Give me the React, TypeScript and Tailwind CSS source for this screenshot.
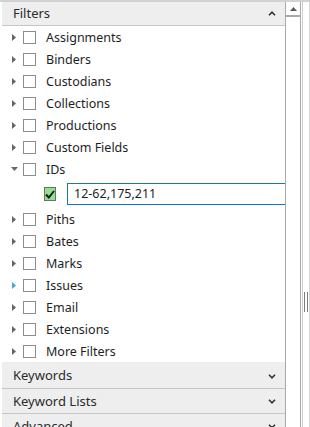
import React from 'react';

type Item = { label: string; open?: boolean; hover?: boolean };

const ITEMS: Item[] = [
  { label: 'Assignments' },
  { label: 'Binders' },
  { label: 'Custodians' },
  { label: 'Collections' },
  { label: 'Productions' },
  { label: 'Custom Fields' },
  { label: 'IDs', open: true },
  { label: 'Piths' },
  { label: 'Bates' },
  { label: 'Marks' },
  { label: 'Issues', hover: true },
  { label: 'Email' },
  { label: 'Extensions' },
  { label: 'More Filters' },
];

function Arrow({ open, hover }: { open?: boolean; hover?: boolean }) {
  const fill = hover ? '#45a9d6' : '#666666';
  return (
    <span className="flex h-[8px] w-[8px] items-center justify-center">
      {open ? (
        <svg width="7" height="4" viewBox="0 0 7 4">
          <polygon points="0,0 7,0 3.5,4" fill={fill} />
        </svg>
      ) : (
        <svg width="4" height="7" viewBox="0 0 4 7">
          <polygon points="0,0 4,3.5 0,7" fill={fill} />
        </svg>
      )}
    </span>
  );
}

function Box() {
  return <span className="block h-[13px] w-[13px] border border-[#8c8c8c] bg-white" />;
}

function Chevron({ up }: { up?: boolean }) {
  return (
    <svg width="8" height="5" viewBox="0 0 8 5">
      <polyline
        points={up ? '1,4.3 4,1.2 7,4.3' : '1,0.8 4,3.8 7,0.8'}
        fill="none"
        stroke="#333333"
        strokeWidth="1.6"
      />
    </svg>
  );
}

function SectionHeader({ title, up, h }: { title: string; up?: boolean; h: string }) {
  return (
    <div
      className={`flex ${h} shrink-0 items-center justify-between border-b border-[#c6c6c6] bg-[#eeeeee] pl-[11px] pr-[9px] text-[13px] text-[#2b2b2b]`}
    >
      <span>{title}</span>
      <Chevron up={up} />
    </div>
  );
}

export default function App() {
  return (
    <div
      className="flex h-[427px] w-[310px] overflow-hidden border-t-2 border-[#d2d2d2] bg-white"
      style={{ fontFamily: '"Noto Sans", "Open Sans", sans-serif' }}
    >
      <div className="flex w-[285px] shrink-0 flex-col overflow-hidden pl-[2px]">
        <SectionHeader title="Filters" up h="h-[24px]" />
        <div className="flex flex-col">
          {ITEMS.map((item) => (
            <React.Fragment key={item.label}>
              <div className="flex h-[22px] items-center pl-[8px] text-[12.5px] text-[#1e1e1e]">
                <Arrow open={item.open} hover={item.hover} />
                <span className="ml-[5px]">
                  <Box />
                </span>
                <span className="ml-[10px] pt-[2px] leading-none">{item.label}</span>
              </div>
              {item.open && (
                <div className="flex h-[28px] items-center">
                  <span className="ml-[42px] flex h-[14px] w-[14px] items-center justify-center border border-[#6f6f6f] bg-[#8fe38f]">
                    <svg width="10" height="9" viewBox="0 0 10 9">
                      <polyline
                        points="1,4.5 3.8,7.5 9,1"
                        fill="none"
                        stroke="#1a1a1a"
                        strokeWidth="2"
                      />
                    </svg>
                  </span>
                  <div className="ml-[11px] flex h-[22px] w-[240px] shrink-0 items-center border border-[#1b72c0] pl-[6px] pt-[1px] text-[12.5px] text-[#1e1e1e]">
                    12-62,175,211
                  </div>
                </div>
              )}
            </React.Fragment>
          ))}
        </div>
        <SectionHeader title="Keywords" h="h-[27px] pt-[2px]" />
        <SectionHeader title="Keyword Lists" h="h-[25px] pt-[1px]" />
        <SectionHeader title="Advanced" h="h-[25px] pt-[1px]" />
      </div>

      <div className="flex w-[16px] shrink-0 flex-col border-x border-[#a9a9a9]">
        <div className="flex h-[15px] items-center justify-center border-b-2 border-[#a9a9a9]">
          <svg width="7" height="4" viewBox="0 0 7 4">
            <polygon points="3.5,0 7,4 0,4" fill="#5c5c5c" />
          </svg>
        </div>
      </div>

      <div className="flex w-[9px] shrink-0">
        <div className="ml-[1px] w-[1px] bg-[#cfcfcf]" />
        <div className="flex w-[5px] items-start justify-center gap-[2px] pl-[1px] pt-[290px]">
          <div className="h-[20px] w-[1px] bg-[#7a7a7a]" />
          <div className="h-[20px] w-[1px] bg-[#7a7a7a]" />
        </div>
        <div className="ml-[1px] w-[1px] bg-[#d6d6d6]" />
      </div>
    </div>
  );
}
